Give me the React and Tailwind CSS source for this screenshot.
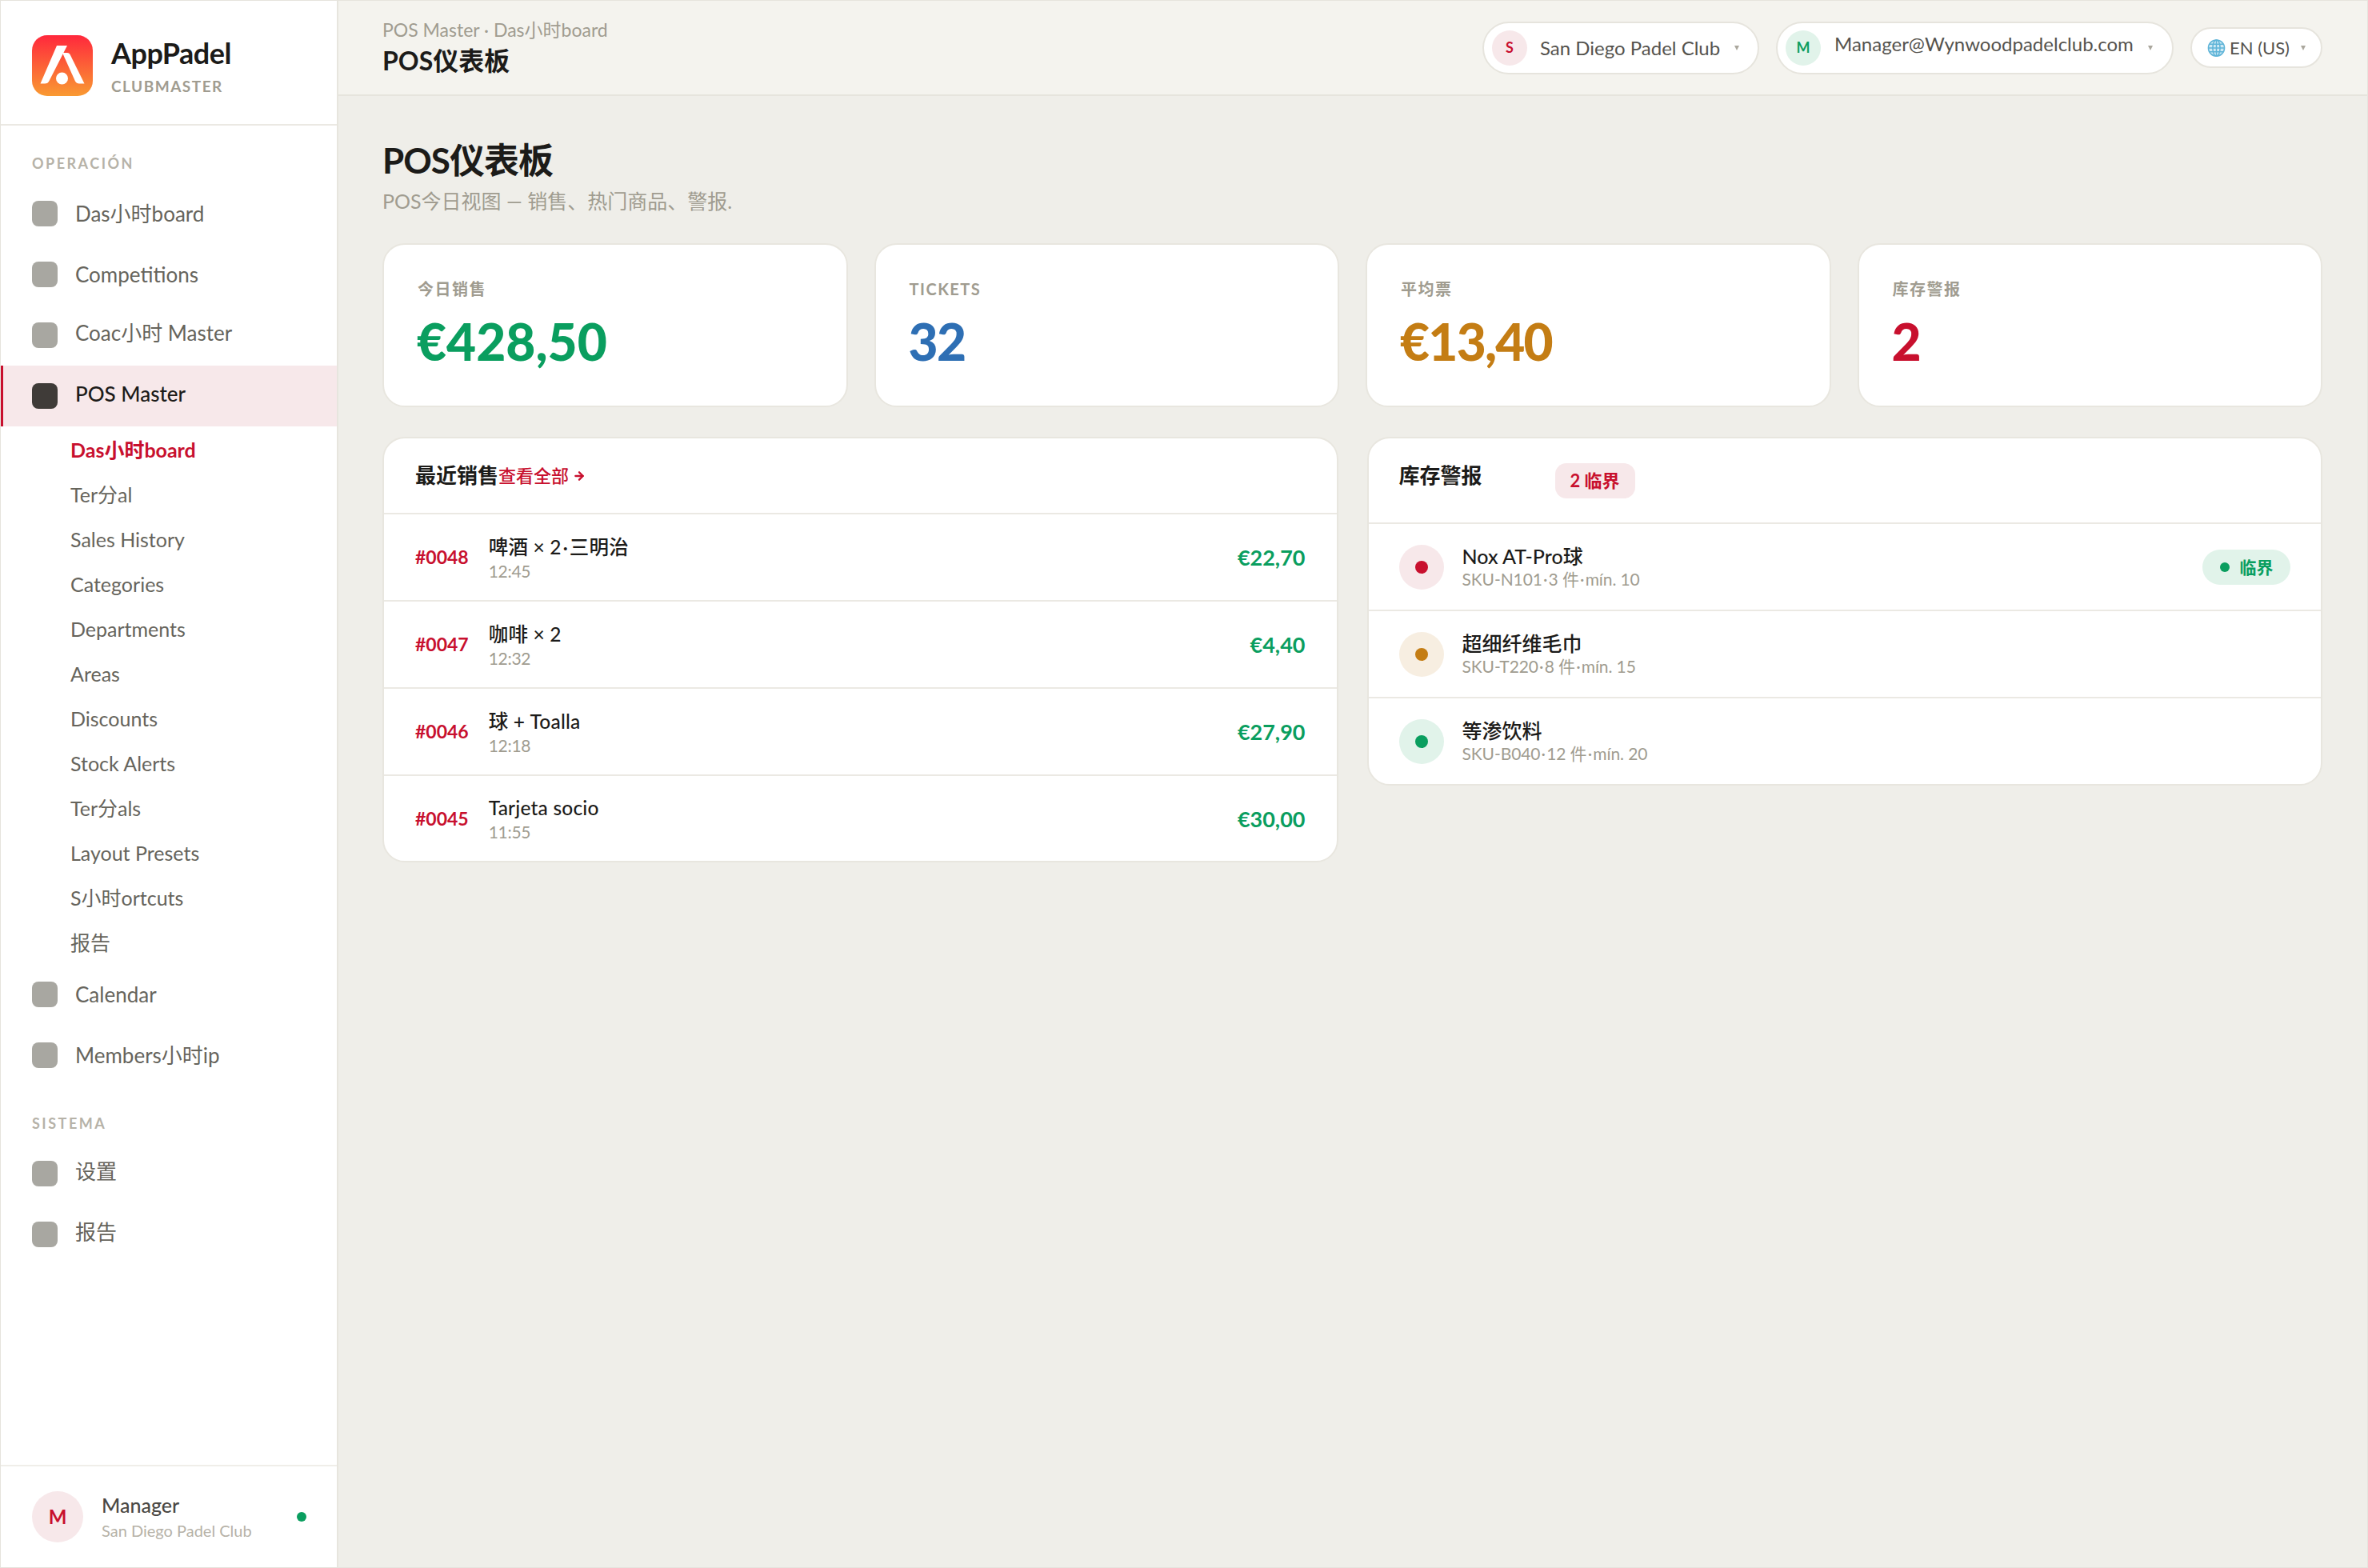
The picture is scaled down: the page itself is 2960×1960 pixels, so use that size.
import { ArrowRight } from "lucide-react";

const mainNav = [
  { label: "Das小时board" },
  { label: "Competitions" },
  { label: "Coac小时 Master", lift: true },
];
const posNav = ["Ter分al", "Sales History", "Categories", "Departments", "Areas", "Discounts", "Stock Alerts", "Ter分als", "Layout Presets", "S小时ortcuts", "报告"];
const stats = [
  { label: "今日销售", value: "€428,50", color: "text-[#0a9e5f] tracking-[0px]" },
  { label: "TICKETS", value: "32", color: "text-[#2e6fb4] tracking-[-1.5px]" },
  { label: "平均票", value: "€13,40", color: "text-[#c47d14] tracking-[-1.800px]" },
  { label: "库存警报", value: "2", color: "text-[#c8102e]" },
];
const sales = [
  { id: "#0048", name: "啤酒 × 2\u200a·\u200a三明治", time: "12:45", total: "€22,70" },
  { id: "#0047", name: "咖啡 × 2", time: "12:32", total: "€4,40" },
  { id: "#0046", name: "球 + Toalla", time: "12:18", total: "€27,90" },
  { id: "#0045", name: "Tarjeta socio", time: "11:55", total: "€30,00" },
];
const alerts = [
  { name: "Nox AT-Pro球", sub: "SKU-N101\u200a·\u200a3 件\u200a·\u200amín. 10", bg: "bg-[#f7e8ea]", dot: "bg-[#c8102e]", badge: true },
  { name: "超细纤维毛巾", sub: "SKU-T220\u200a·\u200a8 件\u200a·\u200amín. 15", bg: "bg-[#f7eee1]", dot: "bg-[#c47d14]" },
  { name: "等渗饮料", sub: "SKU-B040\u200a·\u200a12 件\u200a·\u200amín. 20", bg: "bg-[#e1f3ea]", dot: "bg-[#0a9e5f]" },
];

function Logo() {
  return (
    <svg width="76" height="76" viewBox="0 0 76 76" className="shrink-0">
      <defs>
        <linearGradient id="logoFill" x1="0" y1="0" x2="0" y2="1">
          <stop offset="0" stopColor="#ff283c" />
          <stop offset="1" stopColor="#f99a32" />
        </linearGradient>
      </defs>
      <rect width="76" height="76" rx="19" fill="url(#logoFill)" />
      <path d="M31 13H44L21.500 57Q20 60.500 16 60.500H10.500Z" fill="#fff" />
      <path d="M38 22H44Q46.500 22 47.500 24L65.500 60.500H59Q55.500 60.500 54 57.500Z" fill="#fff" />
      <circle cx="37.500" cy="54" r="7.500" fill="#fff" />
    </svg>
  );
}

function Globe() {
  return (
    <svg width="23" height="24" viewBox="0 0 24 24" className="shrink-0" fill="none" stroke="#5fb4d8" strokeWidth="1.600">
      <circle cx="12" cy="12" r="10.500" fill="#cfe9f4" />
      <ellipse cx="12" cy="12" rx="4.800" ry="10.500" />
      <path d="M12 1.500V22.500M1.500 12H22.500M3 7H21M3 17H21" />
    </svg>
  );
}

function Caret() {
  return <span className="block h-0 w-0 border-x-[3px] border-t-[6px] border-x-transparent border-t-[#aaa79d]" />;
}

function NavItem({ label, active, lift }) {
  return (
    <div className={`flex h-[76px] items-center gap-[22px] pl-[39px] text-[26px] ${active ? "border-l-[3px] border-[#c8102e] bg-[#f7e8ea] !pl-[36px] font-medium text-[#1c1b19]" : "text-[#66645c]"}`}>
      <span className={`h-[32px] w-[32px] rounded-[8px] ${active ? "bg-[#3f3b38]" : "bg-[#a8a7a1]"}`} />
      <span className={lift ? "mb-[6px]" : ""}>{label}</span>
    </div>
  );
}

function SectionLabel({ children }) {
  return <div className="h-[72px] pl-[39px] pt-[35px] text-[18px] font-bold leading-[24px] tracking-[2.500px] text-[#b6b2a8]">{children}</div>;
}

function Sidebar() {
  return (
    <aside className="flex w-[422px] shrink-0 flex-col border-r-2 border-[#e7e5de] bg-white">
      <div className="flex h-[156px] items-center gap-[23px] border-b-2 border-[#ebe9e3] pl-[39px] pt-[8px]">
        <Logo />
        <div>
          <div className="text-[36px] font-bold leading-[44px] tracking-[-0.500px] text-[#1c1b19]">AppPadel</div>
          <div className="mt-[8px] text-[19px] font-bold leading-[24px] tracking-[1.500px] text-[#a09c90]">CLUBMASTER</div>
        </div>
      </div>
      <SectionLabel>OPERACIÓN</SectionLabel>
      {mainNav.map((item) => (
        <NavItem key={item.label} {...item} />
      ))}
      <NavItem label="POS Master" active lift />
      <div className="flex h-[56px] items-center pl-[87px] pt-[3px] text-[25px] font-bold text-[#c8102e]">Das小时board</div>
      {posNav.map((item) => (
        <div key={item} className="flex h-[56px] items-center pl-[87px] pt-[3px] text-[25px] text-[#66645c]">
          {item}
        </div>
      ))}
      <NavItem label="Calendar" />
      <NavItem label="Members小时ip" />
      <SectionLabel>SISTEMA</SectionLabel>
      <NavItem label="设置" lift />
      <NavItem label="报告" lift />
      <div className="mt-auto flex h-[128px] items-center border-t-2 border-[#f0eee9] pl-[39px] pr-[38px]">
        <span className="flex h-[64px] w-[64px] items-center justify-center rounded-full bg-[#f7e8ea] text-[24px] font-bold text-[#c8102e]">M</span>
        <div className="ml-[23px]">
          <div className="text-[25px] font-medium leading-[32px] text-[#4a4844]">Manager</div>
          <div className="mt-[1px] text-[20px] leading-[30px] text-[#b6b2a8]">San Diego Padel Club</div>
        </div>
        <span className="ml-auto h-[12px] w-[12px] rounded-full bg-[#0a9e5f]" />
      </div>
    </aside>
  );
}

function Topbar() {
  return (
    <header className="flex h-[119px] shrink-0 items-center justify-between border-b-2 border-[#e6e4dd] bg-[#f4f3ee] pl-[55px] pr-[56px]">
      <div>
        <div className="text-[23px] leading-[30px] text-[#a09c90]">POS Master · Das小时board</div>
        <div className="mb-[2px] mt-[4px] text-[32px] font-bold leading-[40px] text-[#1c1b19]">POS仪表板</div>
      </div>
      <div className="flex items-center gap-[21px]">
        <div className="flex h-[66px] w-[346px] items-center rounded-full border-2 border-[#e6e4dd] bg-white pl-[10px]">
          <span className="flex h-[44px] w-[44px] items-center justify-center rounded-full bg-[#f7e8ea] text-[18px] font-bold text-[#c8102e]">S</span>
          <span className="ml-[16px] text-[24px] text-[#55534e]">San Diego Padel Club</span>
          <span className="ml-[18px]"><Caret /></span>
        </div>
        <div className="flex h-[66px] w-[497px] items-center rounded-full border-2 border-[#e6e4dd] bg-white pl-[10px]">
          <span className="flex h-[44px] w-[44px] items-center justify-center rounded-full bg-[#e1f3ea] text-[18px] font-bold text-[#0a9e5f]">M</span>
          <span className="mb-[10px] ml-[17px] text-[24px] text-[#55534e]">Manager@Wynwoodpadelclub.com</span>
          <span className="ml-[18px]"><Caret /></span>
        </div>
        <div className="flex h-[51px] w-[165px] items-center rounded-full border-2 border-[#e6e4dd] bg-white pl-[19px]">
          <Globe />
          <span className="ml-[5px] text-[22px] text-[#55534e]">EN (US)</span>
          <span className="ml-[14px]"><Caret /></span>
        </div>
      </div>
    </header>
  );
}

function StatCard({ label, value, color }) {
  return (
    <div className="h-[205px] rounded-[28px] border-2 border-[#e8e6df] bg-white pl-[42px] pt-[41px]">
      <div className="text-[20px] font-bold leading-[28px] tracking-[1.500px] text-[#a09c90]">{label}</div>
      <div className={`-ml-[1px] mt-[16px] text-[64px] font-black leading-[72px] ${color}`}>{value}</div>
    </div>
  );
}

function RecentSales() {
  return (
    <section className="self-start overflow-hidden rounded-[28px] border-2 border-[#e8e6df] bg-white">
      <div className="flex h-[95px] items-center border-b-2 border-[#ebe9e3] pl-[39px]">
        <span className="text-[26px] font-bold text-[#1c1b19]">最近销售</span>
        <span className="text-[22px] font-medium text-[#c8102e]">查看全部</span>
        <ArrowRight size={16} strokeWidth={3.500} className="ml-[5px] text-[#c8102e]" />
      </div>
      {sales.map((sale, i) => (
        <div key={sale.id} className={`flex items-center gap-[25px] px-[39px] ${i < sales.length - 1 ? "h-[109px] border-b-2 border-[#ebe9e3]" : "h-[106px]"}`}>
          <span className="text-[23px] font-bold text-[#c8102e]">{sale.id}</span>
          <div className="pt-[4px]">
            <div className="text-[24.500px] font-medium leading-[30px] tracking-[0.200px] text-[#1c1b19]">{sale.name}</div>
            <div className="text-[21px] leading-[30px] tracking-[-0.300px] text-[#a09c90]">{sale.time}</div>
          </div>
          <span className="ml-auto mt-[2px] text-[27px] font-bold text-[#0a9e5f]">{sale.total}</span>
        </div>
      ))}
    </section>
  );
}

function StockAlerts() {
  return (
    <section className="self-start overflow-hidden rounded-[28px] border-2 border-[#e8e6df] bg-white">
      <div className="flex h-[107px] items-center border-b-2 border-[#ebe9e3] pl-[38px]">
        <span className="mb-[12px] text-[26px] font-bold text-[#1c1b19]">库存警报</span>
        <span className="ml-[91px] flex h-[44px] w-[100px] items-center justify-center rounded-[14px] bg-[#f7e8ea] text-[22px] font-bold text-[#c8102e]">2 临界</span>
      </div>
      {alerts.map((alert, i) => (
        <div key={alert.name} className={`flex items-center pl-[38px] pr-[38px] ${i < alerts.length - 1 ? "h-[109px] border-b-2 border-[#ebe9e3]" : "h-[107px]"}`}>
          <span className={`flex h-[56px] w-[56px] items-center justify-center rounded-full ${alert.bg}`}>
            <span className={`h-[16px] w-[16px] rounded-full ${alert.dot}`} />
          </span>
          <div className="ml-[23px] pt-[1px]">
            <div className="text-[25px] font-medium leading-[30px] text-[#1c1b19]">{alert.name}</div>
            <div className="text-[21px] leading-[28px] tracking-[-0.100px] text-[#a09c90]">{alert.sub}</div>
          </div>
          {alert.badge && (
            <span className="ml-auto flex h-[44px] w-[110px] items-center justify-center gap-[13px] rounded-full bg-[#e1f3ea] text-[21px] font-bold text-[#0a9e5f]">
              <span className="h-[12px] w-[12px] rounded-full bg-[#0a9e5f]" />
              临界
            </span>
          )}
        </div>
      ))}
    </section>
  );
}

export default function App() {
  return (
    <div className="flex h-[1960px] w-[2960px] border border-[#e6e4dd] bg-[#efeee9] font-['Lato','Noto_Sans_CJK_SC',sans-serif]">
      <Sidebar />
      <main className="flex min-w-0 flex-1 flex-col">
        <Topbar />
        <div className="pl-[55px] pr-[56px] pt-[52px]">
          <h1 className="text-[44px] font-bold leading-[56px] tracking-[-1px] text-[#1c1b19]">POS仪表板</h1>
          <p className="mt-[7px] text-[25px] leading-[32px] text-[#a09c90]">POS今日视图 — 销售、热门商品、警报.</p>
          <div className="mt-[37px] grid grid-cols-4 gap-[33px]">
            {stats.map((stat) => (
              <StatCard key={stat.label} {...stat} />
            ))}
          </div>
          <div className="mt-[37px] grid grid-cols-2 gap-[36px]">
            <RecentSales />
            <StockAlerts />
          </div>
        </div>
      </main>
    </div>
  );
}
